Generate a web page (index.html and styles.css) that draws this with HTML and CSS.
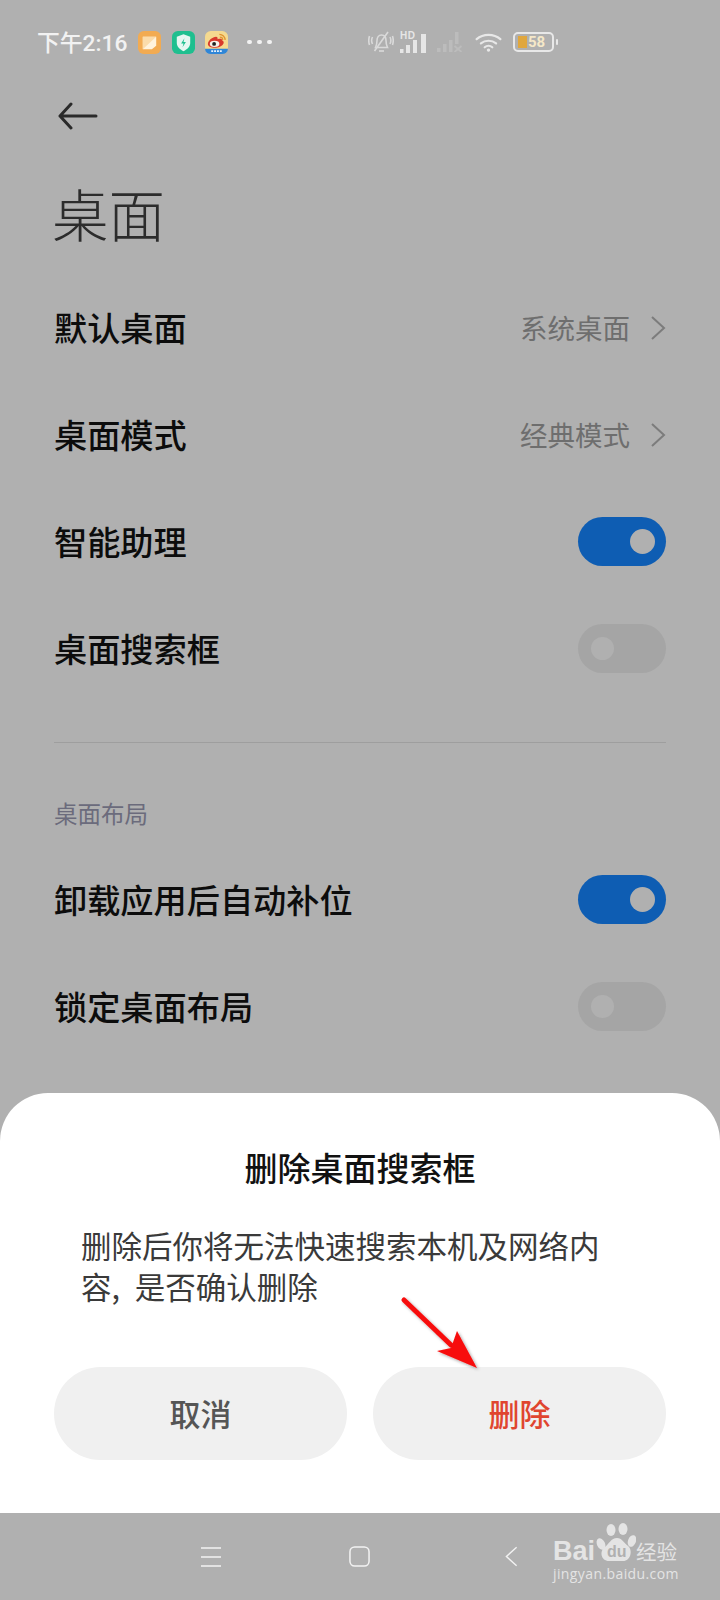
FILE: index.html
```html
<!DOCTYPE html>
<html lang="zh-CN">
<head>
  <meta charset="UTF-8">
  <title>桌面</title>
  <link rel="stylesheet" href="styles.css">
</head>
<body>
<div class="screen">

  <div class="settings">
    <div class="status-bar">
      <span class="time">下午2:16</span>
      <svg class="app-icon" viewBox="0 0 24 24"><rect width="24" height="24" rx="6" fill="#f2ab52"/><path d="M5 6h14v9.500l-4.500 3.500H5z" fill="#fff3dd"/><path d="M5 19L19 6H5z" fill="#fbdcab"/></svg>
      <svg class="app-icon" viewBox="0 0 24 24"><rect width="24" height="24" rx="6" fill="#1fbf8f"/><path d="M12 3.500l7 2.500v6.500c0 4-3 6.500-7 8.500-4-2-7-4.500-7-8.500V6z" fill="#e6f7f1"/><path d="M13 7.500l-3.500 5.500h2.500l-1 4 3.500-5.500h-2.500z" fill="#1fbf8f"/></svg>
      <svg class="app-icon" viewBox="0 0 24 24"><rect width="24" height="24" rx="6" fill="#f5d98f"/><path d="M0 18.500h24a6 5.500 0 0 1-6 5.500H6a6 5.500 0 0 1-6-5.500z" fill="#2f86d8"/><path d="M6.500 21h11" stroke="#e8f2fb" stroke-width="2" stroke-dasharray="2 1"/><path d="M3 13.500c0-3.500 5-7.500 8.500-7.500 1.500 0 2 1 1.500 2.500 3-1 5-.5 5 1.500 3 1 2 6.500-6.500 7.500-5 .3-8.500-1.500-8.500-4z" fill="#d83a2c"/><ellipse cx="10" cy="13.500" rx="5" ry="3.200" fill="#f6f2ea"/><circle cx="9.500" cy="13.500" r="2" fill="#222"/><path d="M15 3.500a6 6 0 0 1 6 6M15.500 6.500a3 3 0 0 1 3 3" stroke="#e2932f" stroke-width="1.300" fill="none"/></svg>
      <span class="dots"><i></i><i></i><i></i></span>

      <div class="status-right">
        <svg class="ico-bell" viewBox="0 0 26 22" fill="none" stroke="#dadada" stroke-width="1.600"><path d="M7.500 16.500c1-2 1.500-4 1.500-7 0-3 1.500-5.500 4.500-5.500s4.500 2.500 4.500 5.500c0 3 .5 5 1.500 7z"/><path d="M11 20h5"/><path d="M20 1L6.500 20"/><path d="M4.500 6c-1 2-1 5 0 7M1.500 5c-1 3-1 6 0 9M22 6c1 2 1 5 0 7M24.500 5c1 3 1 6 0 9"/></svg>
        <div class="signal">
          <span class="hd">HD</span>
          <svg viewBox="0 0 27 19" fill="#e6e6e6"><rect x="0" y="15" width="3.500" height="4"/><rect x="6" y="11" width="4" height="8"/><rect x="13" y="6" width="4" height="13"/><rect x="21" y="0" width="5" height="19"/></svg>
        </div>
        <svg class="signal-off" viewBox="0 0 27 20" fill="#bcbcbc"><rect x="0" y="16" width="3.500" height="4"/><rect x="6" y="12" width="3.500" height="8"/><rect x="12" y="8" width="3.500" height="12"/><rect x="18" y="0" width="3.500" height="12"/><path d="M17.500 14l7 6M24.500 14l-7 6" stroke="#bcbcbc" stroke-width="1.800"/></svg>
        <svg class="wifi" viewBox="0 0 28 20" fill="none" stroke="#e8e8e8" stroke-width="2.300" stroke-linecap="round"><path d="M1.500 6.500c7-6 18-6 25 0"/><path d="M6 11c4.500-3.800 11.500-3.800 16 0"/><path d="M10 15c2.300-2 5.700-2 8 0"/><circle cx="14" cy="18" r="1.800" fill="#e8e8e8" stroke="none"/></svg>
        <div class="battery"><div class="battery-body"><span class="battery-fill"></span><span class="battery-num">58</span></div><span class="battery-cap"></span></div>
      </div>
    </div>

    <div class="back-row">
      <svg class="back" viewBox="0 0 40 28" fill="none" stroke="#2a2a2a" stroke-width="3" stroke-linecap="round" stroke-linejoin="round"><path d="M38 14H2M13 2L2 14l11 12"/></svg>
    </div>

    <h1 class="page-title">桌面</h1>

    <div class="row"><span class="row-label">默认桌面</span><span class="row-value">系统桌面</span><svg class="chevron" viewBox="0 0 16 26" fill="none" stroke="#7c7c7c" stroke-width="2"><path d="M2 2l12 11L2 24"/></svg></div>
    <div class="row"><span class="row-label">桌面模式</span><span class="row-value">经典模式</span><svg class="chevron" viewBox="0 0 16 26" fill="none" stroke="#7c7c7c" stroke-width="2"><path d="M2 2l12 11L2 24"/></svg></div>
    <div class="row"><span class="row-label">智能助理</span><span class="switch on"></span></div>
    <div class="row"><span class="row-label">桌面搜索框</span><span class="switch"></span></div>

    <div class="divider"></div>
    <div class="section-title">桌面布局</div>

    <div class="row"><span class="row-label">卸载应用后自动补位</span><span class="switch on"></span></div>
    <div class="row"><span class="row-label">锁定桌面布局</span><span class="switch"></span></div>
  </div>

  <div class="sheet">
    <h2 class="sheet-title">删除桌面搜索框</h2>
    <p class="sheet-text">删除后你将无法快速搜索本机及网络内<br>容, 是否确认删除</p>
    <div class="sheet-buttons">
      <button class="btn">取消</button>
      <button class="btn btn-danger">删除</button>
    </div>
  </div>

  <div class="nav-bar">
    <svg class="nav-menu" viewBox="0 0 20 20" stroke="#f2f2f2" stroke-width="1.300"><path d="M0 1h20M0 10h20M0 19h20"/></svg>
    <svg class="nav-home" viewBox="0 0 22 22" fill="none" stroke="#f2f2f2" stroke-width="1.600"><rect x="1" y="1" width="20" height="20" rx="5"/></svg>
    <svg class="nav-back" viewBox="0 0 14 22" fill="none" stroke="#f2f2f2" stroke-width="1.500"><path d="M12.500 1L1.500 11l11 10"/></svg>
  </div>

  <!-- red arrow from the screenshot annotation -->
  <svg class="annotation" viewBox="0 0 90 80">
    <defs><filter id="shade" x="-20%" y="-20%" width="150%" height="150%"><feDropShadow dx="1.500" dy="1.500" stdDeviation="1.500" flood-color="#000" flood-opacity=".35"/></filter></defs>
    <path d="M3 3L50 48" stroke="#f70c0c" stroke-width="5" stroke-linecap="round" fill="none" filter="url(#shade)"/>
    <path d="M76 71L36 54 50 51 56 34z" fill="#f70c0c" filter="url(#shade)"/>
  </svg>

  <div class="watermark">
    <div class="wm-top">
      <span class="wm-bai">Bai</span>
      <div class="wm-paw">
        <svg viewBox="0 0 40 42" fill="#e4e4e4"><ellipse cx="15" cy="7" rx="4.500" ry="6"/><ellipse cx="27" cy="6" rx="4.500" ry="6"/><ellipse cx="36" cy="18" rx="4" ry="6" transform="rotate(20 36 18)"/><ellipse cx="5" cy="21" rx="4" ry="6" transform="rotate(-25 5 21)"/><path d="M21 15c5 0 7 5 11 8 5 4 3 15-5 15H13C5 38 3 28 9 24c4-3 6-9 12-9z"/></svg>
        <span class="wm-du">du</span>
      </div>
      <span class="wm-jy">经验</span>
    </div>
    <div class="wm-url">jingyan.baidu.com</div>
  </div>

</div>
</body>
</html>
```

FILE: styles.css
```css
* {
  box-sizing: border-box;
}

body {
  margin: 0;
  padding: 0;
  background: #b0b0b0;
  font-family: "Noto Sans CJK SC", "Noto Sans", sans-serif;
}

.screen {
  position: relative;
  width: 720px;
  height: 1600px;
  display: flex;
  flex-direction: column;
  overflow: hidden;
  background: #b0b0b0;
}

.settings {
  flex: 1;
}

/* status bar */
.status-bar {
  height: 84px;
  padding: 0 0 0 37px;
  display: flex;
  align-items: center;
  color: #f2f2f2;
}

.time {
  font-size: 22.800px;
  font-weight: 500;
  width: 101px;
  margin-top: -2px;
  white-space: nowrap;
  font-family: Roboto, "Noto Sans CJK SC", sans-serif;
}

.app-icon {
  width: 23px;
  height: 23px;
  margin-right: 10.500px;
}

.dots {
  display: flex;
  gap: 5.500px;
  margin-left: 8.500px;
}

.dots i {
  width: 4.500px;
  height: 4.500px;
  border-radius: 50%;
  background: #f2f2f2;
}

.status-right {
  display: flex;
  align-items: center;
  margin-left: 96.500px;
}

.ico-bell {
  width: 26px;
  height: 22px;
  margin-right: 6px;
}

.signal {
  position: relative;
  width: 27px;
  height: 21px;
  margin-right: 10px;
  display: flex;
  align-items: flex-end;
}

.signal svg {
  width: 27px;
  height: 19px;
}

.hd {
  position: absolute;
  left: 0;
  top: -2px;
  font-size: 10px;
  line-height: 11px;
  font-weight: 700;
  letter-spacing: .5px;
  color: #e6e6e6;
  font-family: "Liberation Sans", sans-serif;
}

.signal-off {
  width: 27px;
  height: 20px;
  margin-right: 11px;
}

.wifi {
  width: 27px;
  height: 19px;
  margin-right: 11px;
}

.battery {
  display: flex;
  align-items: center;
  gap: 2px;
}

.battery-body {
  position: relative;
  width: 41px;
  height: 20px;
  padding-left: 13px;
  border: 2px solid #e8e8e8;
  border-radius: 5px;
}

.battery-fill {
  position: absolute;
  left: 3px;
  top: 2px;
  bottom: 2px;
  width: 9px;
  background: #e0a73e;
}

.battery-num {
  position: relative;
  display: block;
  font-size: 15px;
  line-height: 16px;
  font-weight: 700;
  color: #f5e8c8;
  font-family: Roboto, sans-serif;
}

.battery-cap {
  width: 2px;
  height: 6px;
  background: #e8e8e8;
  border-radius: 1px;
}

/* page head */
.back-row {
  height: 64px;
  padding-left: 58px;
  display: flex;
  align-items: center;
}

.back {
  width: 40px;
  height: 28px;
}

.page-title {
  margin: 0;
  height: 126px;
  line-height: 128px;
  padding-left: 52px;
  font-size: 56.500px;
  font-weight: 300;
  color: #2c2c2c;
}

/* rows */
.row {
  height: 107px;
  padding: 0 54px;
  display: flex;
  align-items: center;
}

.row-label {
  flex: 1;
  margin-top: -2px;
  font-size: 33.200px;
  font-weight: 500;
  color: #0c0c0c;
}

.row-value {
  font-size: 27.500px;
  margin-top: -2px;
  color: #6e6e6e;
}

.chevron {
  width: 16px;
  height: 26px;
  margin-left: 20px;
}

.switch {
  position: relative;
  width: 88px;
  height: 49px;
  border-radius: 25px;
  background: #a5a5a5;
}

.switch::after {
  content: "";
  position: absolute;
  left: 13px;
  top: 13px;
  width: 23px;
  height: 23px;
  border-radius: 50%;
  background: #b0b0b0;
}

.switch.on {
  background: #0e5db3;
}

.switch.on::after {
  left: 52px;
  top: 12px;
  width: 25px;
  height: 25px;
}

.divider {
  height: 1px;
  margin: 40px 54px 0;
  background: #9e9e9e;
}

.section-title {
  height: 103px;
  padding-left: 54px;
  font-size: 23.500px;
  line-height: 140px;
  color: #6b6b7c;
}

/* bottom sheet */
.sheet {
  height: 420px;
  padding: 50px 54px 0;
  background: #fff;
  border-radius: 48px 48px 0 0;
}

.sheet-title {
  margin: 0;
  text-align: center;
  font-size: 33px;
  line-height: 48px;
  font-weight: 500;
  color: #111;
}

.sheet-text {
  margin: 34px 0 0;
  padding-left: 27px;
  font-size: 30.500px;
  line-height: 41px;
  word-spacing: 8px;
  color: #3a3a3a;
}

.sheet-buttons {
  display: flex;
  gap: 26px;
  margin-top: 60px;
}

.btn {
  flex: 1;
  height: 93px;
  padding-bottom: 3px;
  border: none;
  border-radius: 47px;
  background: #f0f0f0;
  font-family: inherit;
  font-size: 31px;
  font-weight: 500;
  color: #555;
}

.btn-danger {
  color: #e0452f;
}

/* navigation bar */
.nav-bar {
  position: relative;
  height: 87px;
  padding-left: 201px;
  display: flex;
  align-items: center;
  background: #b0b0b0;
}

.nav-menu {
  width: 20px;
  height: 20px;
}

.nav-home {
  width: 21px;
  height: 21px;
  margin-left: 128px;
}

.nav-back {
  width: 13px;
  height: 21px;
  margin-left: 135px;
}

/* overlays */
.annotation {
  position: absolute;
  left: 401px;
  top: 1297px;
  width: 90px;
  height: 80px;
}

.watermark {
  position: absolute;
  left: 553px;
  top: 1523px;
  width: 130px;
  color: #e4e4e4;
}

.wm-top {
  display: flex;
  align-items: flex-end;
  height: 42px;
  line-height: 1;
  font-family: "Liberation Sans", sans-serif;
  font-weight: 700;
}

.wm-bai {
  font-size: 27px;
}

.wm-paw {
  position: relative;
  width: 40px;
  height: 42px;
  margin-left: 1px;
}

.wm-paw svg {
  display: block;
  width: 40px;
  height: 42px;
}

.wm-du {
  position: absolute;
  left: 11px;
  top: 21px;
  font-size: 16px;
  color: #b0b0b0;
}

.wm-jy {
  font-size: 20.500px;
  line-height: 28px;
  font-family: "Noto Sans CJK SC", sans-serif;
  font-weight: 400;
}

.wm-url {
  font-size: 14px;
  line-height: 18px;
  letter-spacing: .4px;
  white-space: nowrap;
  font-family: "Open Sans", sans-serif;
}
```
